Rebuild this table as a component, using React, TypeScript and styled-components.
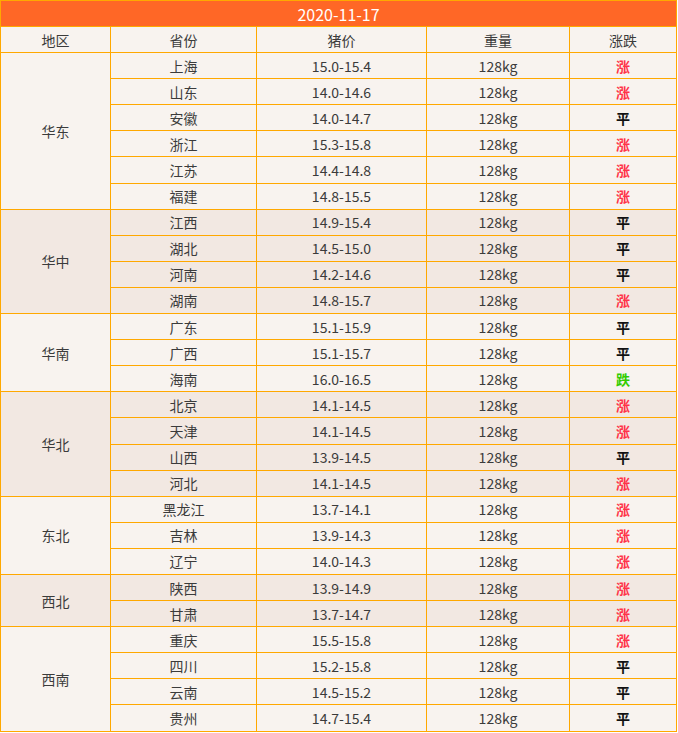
import React from "react";
import styled, { createGlobalStyle } from "styled-components";

type Trend = "涨" | "平" | "跌";
type Row = [string, string, Trend];
type Group = { region: string; shaded: boolean; rows: Row[] };

const groups: Group[] = [
    {
        region: "华东",
        shaded: false,
        rows: [
            ["上海", "15.0-15.4", "涨"],
            ["山东", "14.0-14.6", "涨"],
            ["安徽", "14.0-14.7", "平"],
            ["浙江", "15.3-15.8", "涨"],
            ["江苏", "14.4-14.8", "涨"],
            ["福建", "14.8-15.5", "涨"],
        ],
    },
    {
        region: "华中",
        shaded: true,
        rows: [
            ["江西", "14.9-15.4", "平"],
            ["湖北", "14.5-15.0", "平"],
            ["河南", "14.2-14.6", "平"],
            ["湖南", "14.8-15.7", "涨"],
        ],
    },
    {
        region: "华南",
        shaded: false,
        rows: [
            ["广东", "15.1-15.9", "平"],
            ["广西", "15.1-15.7", "平"],
            ["海南", "16.0-16.5", "跌"],
        ],
    },
    {
        region: "华北",
        shaded: true,
        rows: [
            ["北京", "14.1-14.5", "涨"],
            ["天津", "14.1-14.5", "涨"],
            ["山西", "13.9-14.5", "平"],
            ["河北", "14.1-14.5", "涨"],
        ],
    },
    {
        region: "东北",
        shaded: false,
        rows: [
            ["黑龙江", "13.7-14.1", "涨"],
            ["吉林", "13.9-14.3", "涨"],
            ["辽宁", "14.0-14.3", "涨"],
        ],
    },
    {
        region: "西北",
        shaded: true,
        rows: [
            ["陕西", "13.9-14.9", "涨"],
            ["甘肃", "13.7-14.7", "涨"],
        ],
    },
    {
        region: "西南",
        shaded: false,
        rows: [
            ["重庆", "15.5-15.8", "涨"],
            ["四川", "15.2-15.8", "平"],
            ["云南", "14.5-15.2", "平"],
            ["贵州", "14.7-15.4", "平"],
        ],
    },
];

const App = () => {
    return (
        <>
            <GlobalStyle />
            <Table>
                <colgroup>
                    <col style={{ width: 110 }} />
                    <col style={{ width: 146 }} />
                    <col style={{ width: 170 }} />
                    <col style={{ width: 143 }} />
                    <col style={{ width: 107 }} />
                </colgroup>
                <thead>
                    <tr>
                        <Title colSpan={5}>2020-11-17</Title>
                    </tr>
                    <HeadRow>
                        <Cell>地区</Cell>
                        <Cell>省份</Cell>
                        <Cell>猪价</Cell>
                        <Cell>重量</Cell>
                        <Cell>涨跌</Cell>
                    </HeadRow>
                </thead>
                <tbody>
                    {groups.map((g) =>
                        g.rows.map((r, i) => (
                            <DataRow key={g.region + r[0]} $shaded={g.shaded}>
                                {i === 0 && <Cell rowSpan={g.rows.length}>{g.region}</Cell>}
                                <Cell>{r[0]}</Cell>
                                <Cell>{r[1]}</Cell>
                                <Cell>128kg</Cell>
                                <Cell>
                                    <Mark $trend={r[2]}>{r[2]}</Mark>
                                </Cell>
                            </DataRow>
                        ))
                    )}
                </tbody>
            </Table>
        </>
    );
};

export default App;

const GlobalStyle = createGlobalStyle`
body {
    margin: 0;
    background: #fff;
    font-family: "Noto Sans CJK SC", "Open Sans", sans-serif;
}
`

const Table = styled.table`
width: 677px;
border-collapse: collapse;
table-layout: fixed;
border: 1px solid #ffa800;
`
const Title = styled.th`
height: 25px;
padding: 0;
background-color: #ff6726;
color: #fff;
font-size: 16px;
font-weight: normal;
line-height: 24px;
border: 1px solid #ffa800;
`
const HeadRow = styled.tr`
background-color: #f8f3ef;
`
const DataRow = styled.tr<{ $shaded: boolean }>`
background-color: ${(p) => (p.$shaded ? "#f2e8e2" : "#f8f3ef")};
`
const Cell = styled.td`
height: 25.1px;
padding: 0;
text-align: center;
font-size: 14px;
line-height: 20px;
color: #3b3b3b;
border: 1px solid #ffa800;
`
const Mark = styled.span<{ $trend: Trend }>`
font-weight: 600;
color: ${(p) => (p.$trend === "涨" ? "#ff3348" : p.$trend === "跌" ? "#33cc00" : "#111")};
`
